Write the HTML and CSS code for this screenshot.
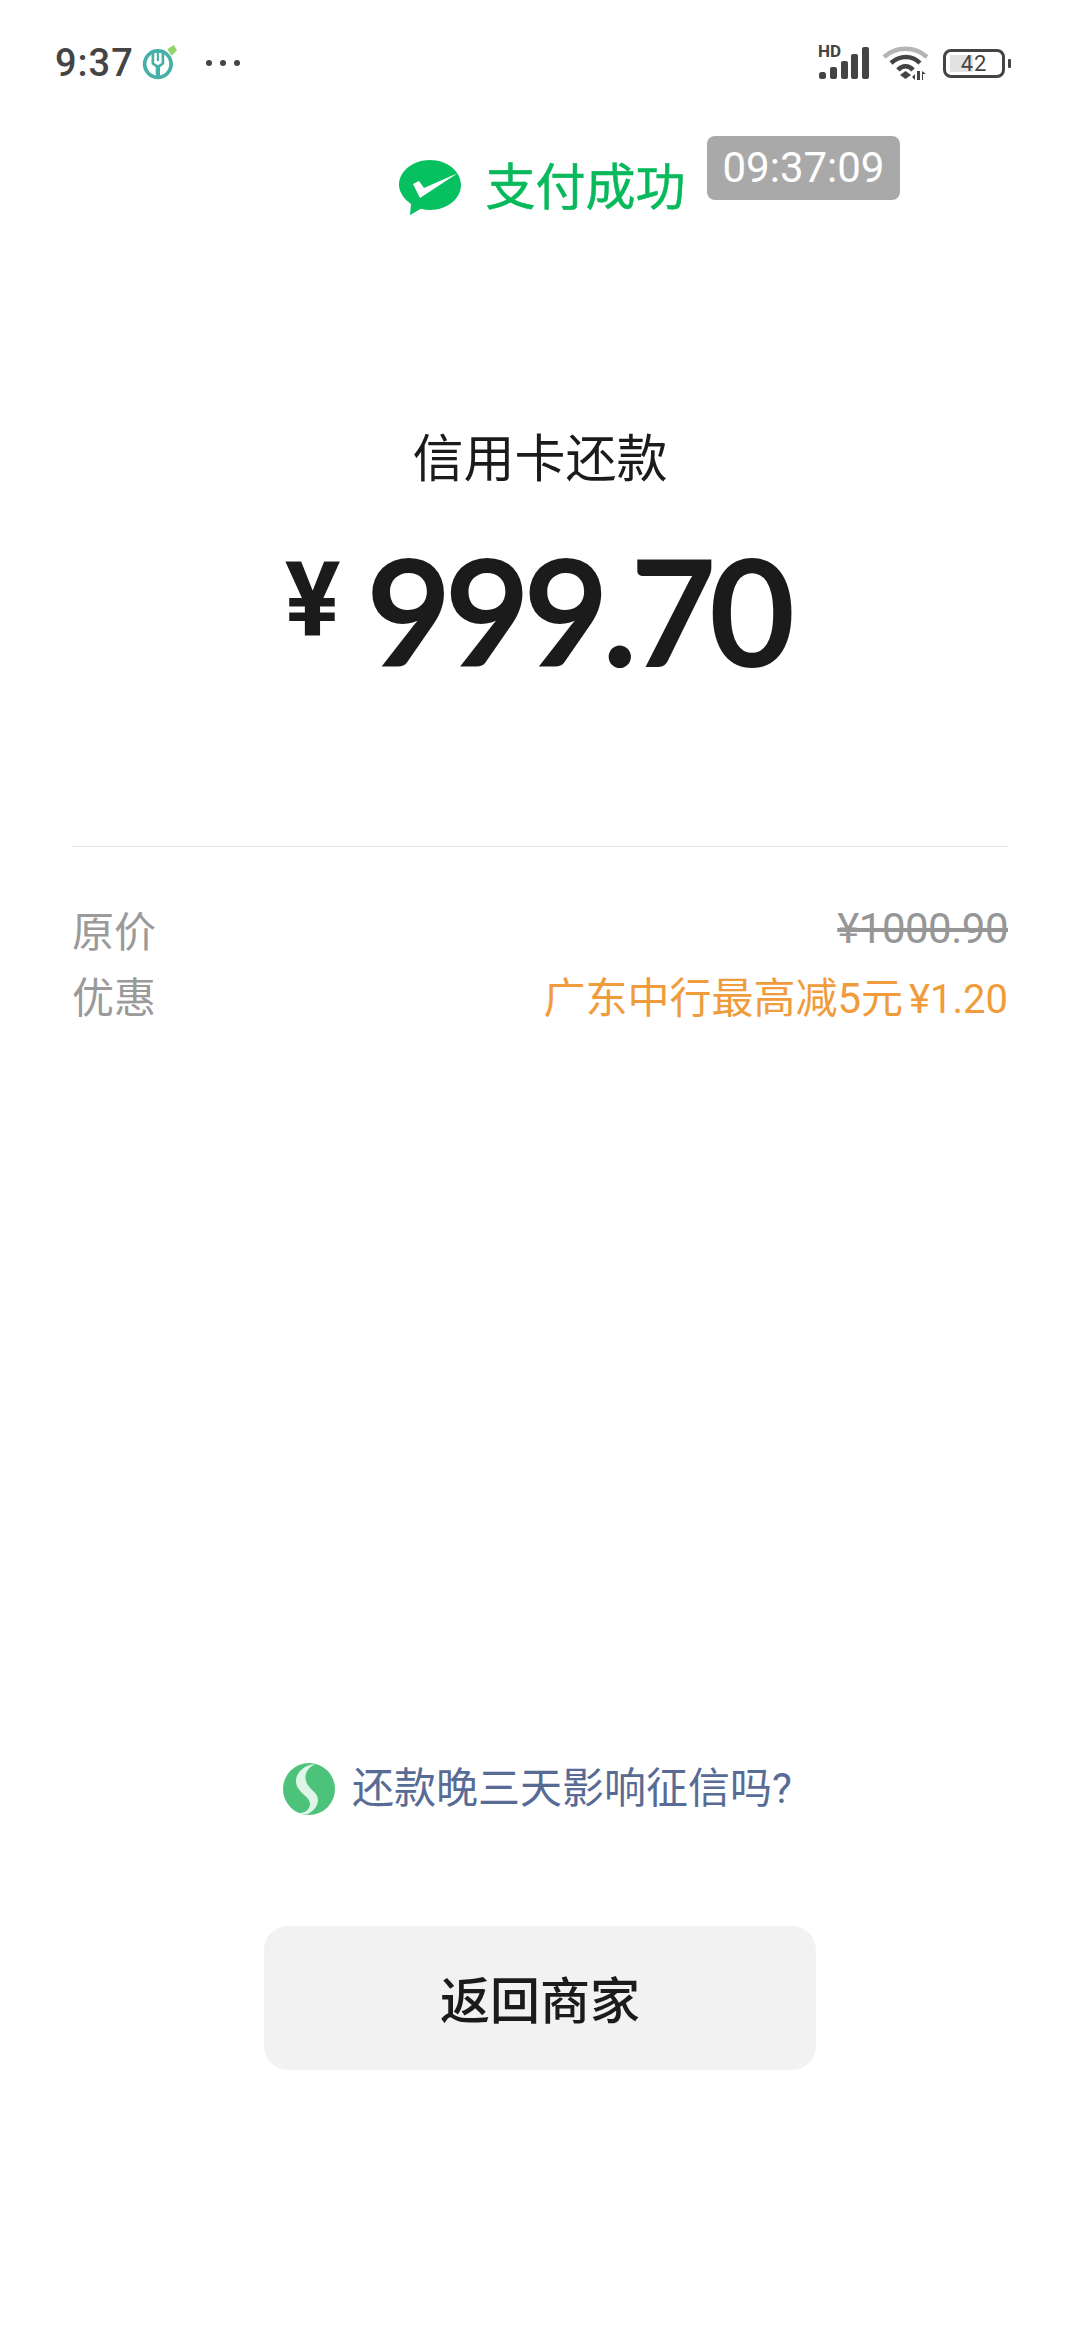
FILE: index.html
```html
<!DOCTYPE html>
<html lang="zh-CN">
<head>
    <meta charset="UTF-8">
    <meta name="viewport" content="width=device-width, initial-scale=1.0">
    <title>支付成功</title>
    <link rel="stylesheet" href="styles.css">
</head>
<body>
    <div class="status-bar">
        <div class="status-left">
            <span class="clock">9:37</span>
            <svg class="bank-icon" width="36" height="36" viewBox="0 0 34 34">
                <circle cx="15" cy="19" r="12.500" fill="none" stroke="#45b0a5" stroke-width="3.500"/>
                <path d="M9 6v13l4 3v10h4V22l4-3V6h-2.500v12L15 20l-3.500-2V6zM14 6h2v10h-2z" fill="#45b0a5"/>
                <path d="M24 5l6-4 3 5-5 5z" fill="#8ed667"/>
            </svg>
            <div class="dots"><span></span><span></span><span></span></div>
        </div>
        <div class="status-right">
            <div class="signal">
                <span class="hd-text">HD</span>
                <svg class="signal-icon" width="52" height="36" viewBox="0 0 52 36">
                    <rect x="2" y="27" width="7" height="7" rx="2.500" fill="#444"/>
                    <rect x="13" y="22" width="7" height="12" rx="2" fill="#444"/>
                    <rect x="24" y="16" width="7" height="18" rx="2" fill="#444"/>
                    <rect x="34" y="9" width="7" height="25" rx="2" fill="#444"/>
                    <rect x="45" y="2" width="7" height="32" rx="2" fill="#444"/>
                </svg>
            </div>
            <svg class="wifi-icon" width="48" height="36" viewBox="0 0 48 36">
                <path d="M2 12C14 1 33 1 45 12" fill="none" stroke="#b5b5b5" stroke-width="4.500"/>
                <path d="M9 18C18 10 30 10 38 18" fill="none" stroke="#444" stroke-width="4.500"/>
                <path d="M16 25C20 20 27 20 31 25" fill="none" stroke="#444" stroke-width="4.500"/>
                <path d="M18 30l5.500-4 5.500 4-5.500 4z" fill="#444"/>
                <path d="M33 35v-6l-3 3zM35 35v-9h3v9zM40 26l4 3h-3v6h-1z" fill="#444"/>
            </svg>
            <div class="battery">
                <div class="battery-body">
                    <div class="battery-fill"></div>
                    <span class="battery-num">42</span>
                </div>
                <div class="battery-nub"></div>
            </div>
        </div>
    </div>

    <div class="pay-header">
        <svg class="wechat-icon" width="62" height="56" viewBox="0 0 62 56">
            <path d="M31 0C48 0 62 11 62 25S48 50 31 50c-3 0-6-.4-9-1.200L11 55l1-11C5 39 0 32 0 25 0 11 14 0 31 0z" fill="#07c160"/>
            <path d="M14 24l6-3 5 7L59 13 21 38z" fill="#fff"/>
        </svg>
        <span class="pay-status">支付成功</span>
        <span class="time-tag">09:37:09</span>
    </div>

    <div class="merchant">信用卡还款</div>
    <div class="amount">
        <span class="amount-yen">¥</span>
        <span class="amount-num">999.70</span>
    </div>

    <div class="details">
        <div class="detail-row">
            <span class="detail-label">原价</span>
            <span class="price-old">¥1000.90</span>
        </div>
        <div class="detail-row">
            <span class="detail-label">优惠</span>
            <span class="price-cut">广东中行最高减5元<span class="price-cut-num">¥1.20</span></span>
        </div>
    </div>

    <div class="bottom">
        <div class="ad-link">
            <svg class="ad-icon" width="52" height="52" viewBox="0 0 52 52">
                <circle cx="26" cy="26" r="26" fill="#4cc27a"/>
                <path d="M33 1c-8 3-12 10-10 17 2 8 12 11 12 19 0 5-3 10-10 14-4 1-7 0-9-1 8 0 11-5 11-9 0-8-13-11-14-22C12 11 21 1 33 1z" fill="#dff5e7"/>
            </svg>
            <span class="ad-text">还款晚三天影响征信吗?</span>
        </div>
        <button class="back-button">返回商家</button>
    </div>
</body>
</html>
```

FILE: styles.css
```css
body {
    margin: 0;
    padding: 0;
    height: 2330px;
    overflow: hidden;
    background: #fff;
    color: #1b1b1b;
    font-family: 'Roboto', 'Noto Sans CJK SC', sans-serif;
}
.status-bar {
    height: 126px;
    padding: 0 69px 0 55px;
    display: flex;
    align-items: center;
    justify-content: space-between;
}
.status-left {
    display: flex;
    align-items: center;
}
.clock {
    font-size: 38px;
    font-weight: 500;
    color: #444;
    letter-spacing: 1px;
}
.bank-icon {
    margin-left: 8px;
    margin-top: -3px;
}
.dots {
    display: flex;
    gap: 8px;
    margin-left: 28px;
}
.dots span {
    width: 6px;
    height: 6px;
    border-radius: 50%;
    background: #444;
}
.status-right {
    display: flex;
    align-items: center;
    gap: 13px;
}
.signal {
    position: relative;
    height: 36px;
}
.hd-text {
    position: absolute;
    left: 1px;
    top: -4px;
    font-size: 17px;
    line-height: 20px;
    font-weight: 700;
    color: #444;
}
.battery {
    display: flex;
    align-items: center;
    gap: 3px;
}
.battery-body {
    position: relative;
    width: 62px;
    height: 29px;
    box-sizing: border-box;
    border: 3px solid #444;
    border-radius: 8px;
    display: flex;
    align-items: center;
    justify-content: center;
}
.battery-fill {
    position: absolute;
    left: 4px;
    top: 3px;
    bottom: 3px;
    width: 23px;
    background: #e2e2e2;
}
.battery-num {
    position: relative;
    font-size: 22px;
    color: #444;
    letter-spacing: 1px;
}
.battery-nub {
    width: 3px;
    height: 9px;
    border-radius: 1px;
    background: #444;
}
.pay-header {
    position: relative;
    height: 122px;
    padding: 2px 0 0 4px;
    box-sizing: border-box;
    display: flex;
    align-items: center;
    justify-content: center;
    gap: 25px;
}
.pay-status {
    font-size: 50px;
    line-height: 60px;
    color: #07b95b;
    -webkit-text-stroke: .5px #07b95b;
}
.time-tag {
    position: absolute;
    left: 707px;
    top: 10px;
    width: 193px;
    height: 64px;
    border-radius: 8px;
    background: #a9a9a9;
    color: #fff;
    font-size: 42px;
    line-height: 64px;
    text-align: center;
}
.merchant {
    margin-top: 182px;
    text-align: center;
    font-size: 51px;
    line-height: 60px;
}
.amount {
    margin-top: 50px;
    padding-right: 7px;
    height: 140px;
    display: flex;
    justify-content: center;
    align-items: flex-start;
    gap: 26px;
    color: #1b1b1b;
}
.amount-yen {
    font-size: 104px;
    line-height: 104px;
    font-weight: 700;
    margin-top: 8px;
}
.amount-num {
    font-family: 'Lato', 'Roboto', sans-serif;
    font-size: 146px;
    line-height: 140px;
    font-weight: 600;
    letter-spacing: -6px;
    -webkit-text-stroke: 2px #1b1b1b;
}
.details {
    margin: 166px 72px 0;
    padding-top: 48px;
    border-top: 1px solid #e6e6e6;
}
.detail-row {
    height: 66px;
    display: flex;
    align-items: center;
    justify-content: space-between;
    font-size: 42px;
}
.detail-label {
    color: #9a9a9a;
}
.price-old {
    color: #969696;
    text-decoration: line-through;
    letter-spacing: -.5px;
}
.price-cut {
    color: #f09c3c;
}
.price-cut-num {
    margin-left: 6px;
    font-size: 40px;
}
.bottom {
    margin-top: 736px;
    display: flex;
    flex-direction: column;
    align-items: center;
}
.ad-link {
    display: flex;
    align-items: center;
    gap: 17px;
    padding-right: 5px;
}
.ad-text {
    font-size: 42px;
    line-height: 52px;
    color: #576b95;
}
.back-button {
    margin-top: 111px;
    padding: 0 0 3px;
    width: 552px;
    height: 144px;
    border: none;
    border-radius: 24px;
    background: #f2f2f2;
    color: #1b1b1b;
    font-family: inherit;
    font-size: 50px;
    font-weight: 500;
}
```
